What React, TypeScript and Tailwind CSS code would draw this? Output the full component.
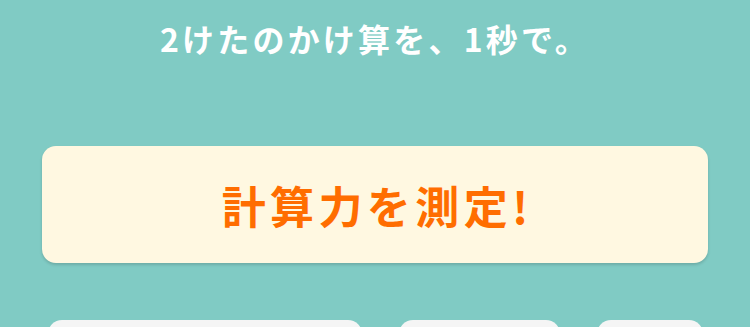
export default function App() {
  return (
    <div
      className="w-[750px] h-[327px] overflow-hidden bg-[#80cbc4] flex flex-col"
      style={{ fontFamily: '"Noto Sans CJK JP", "Noto Sans", sans-serif' }}
    >
      <h1 className="shrink-0 pt-[14px] h-[146px] text-center text-white font-bold text-[32px] leading-[48px] tracking-[0.1em]">
        2けたのかけ算を、1秒で。
      </h1>

      <div className="shrink-0 mx-[42px] h-[117px] rounded-[14px] bg-[#fff8e1] shadow-[0_2px_3px_rgba(0,0,0,0.15)] flex items-center justify-center">
        <span className="text-[#ff6d00] font-bold text-[44px] leading-none tracking-[0.1em] pl-[0.1em]">
          計算力を測定!
        </span>
      </div>

      <div className="shrink-0 mt-[57px] ml-[48px] mr-[47px] flex gap-[37px]">
        <div className="w-[315px] h-[60px] rounded-[14px] bg-[#f5f5f5]" />
        <div className="w-[161px] h-[60px] rounded-[14px] bg-[#f5f5f5]" />
        <div className="w-[106px] h-[60px] rounded-[14px] bg-[#f5f5f5]" />
      </div>
    </div>
  );
}
